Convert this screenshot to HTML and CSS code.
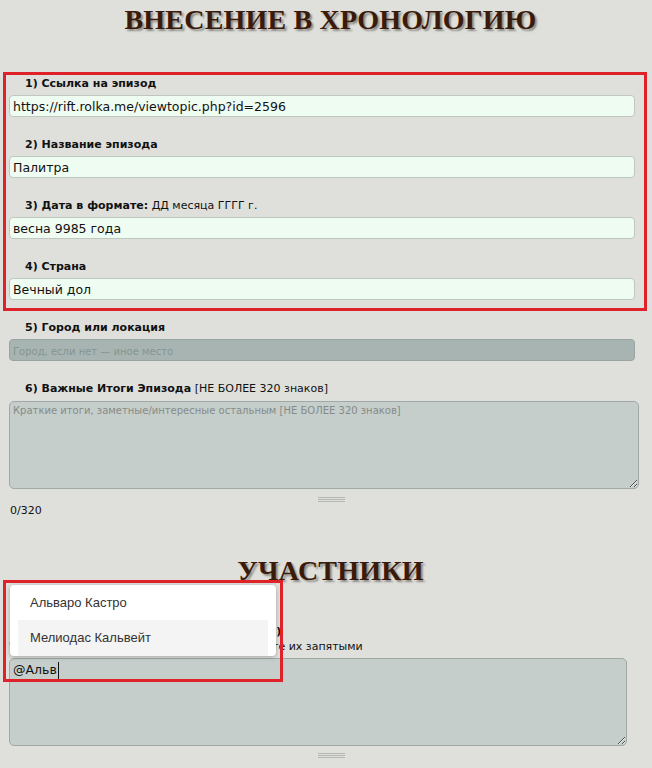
FILE: index.html
```html
<!DOCTYPE html>
<html lang="ru">
<head>
<meta charset="utf-8">
<title>Внесение в хронологию</title>
<link rel="stylesheet" href="styles.css">
</head>
<body>
<div class="page">
  <h1 class="title">ВНЕСЕНИЕ В ХРОНОЛОГИЮ</h1>

  <div class="group">
    <div class="field">
      <div class="label"><b>1) Ссылка на эпизод</b></div>
      <input class="inp" type="text" value="https://rift.rolka.me/viewtopic.php?id=2596">
    </div>
    <div class="field">
      <div class="label"><b>2) Название эпизода</b></div>
      <input class="inp" type="text" value="Палитра">
    </div>
    <div class="field">
      <div class="label"><b>3) Дата в формате:</b> ДД месяца ГГГГ г.</div>
      <input class="inp" type="text" value="весна 9985 года">
    </div>
    <div class="field">
      <div class="label"><b>4) Страна</b></div>
      <input class="inp" type="text" value="Вечный дол">
    </div>
  </div>

  <div class="field">
    <div class="label"><b>5) Город или локация</b></div>
    <input class="inp inp-dark" type="text" placeholder="Город, если нет — иное место">
  </div>
  <div class="field field-6">
    <div class="label"><b>6) Важные Итоги Эпизода</b> [НЕ БОЛЕЕ 320 знаков]</div>
    <textarea class="area area-6" placeholder="Краткие итоги, заметные/интересные остальным [НЕ БОЛЕЕ 320 знаков]"></textarea>
  </div>
  <div class="grip"></div>
  <div class="counter">0/320</div>

  <h1 class="title title-2">УЧАСТНИКИ</h1>

  <div class="field field-7">
    <div class="label label-7"><b>7) Участники эпизода (ники персонажей)</b></div>
    <div class="hint">Через @ укажите всех участников, разделяйте их запятыми</div>
    <div class="area-wrap">
      <textarea class="area area-7">@Альв</textarea>
      <span class="caret"></span>
      <div class="dropdown">
        <div class="opt">Альваро Кастро</div>
        <div class="opt opt-active">Мелиодас Кальвейт</div>
      </div>
      <div class="mark"></div>
    </div>
  </div>
  <div class="grip grip-2"></div>
</div>
</body>
</html>
```

FILE: styles.css
```css
html, body {
  margin: 0;
  padding: 0;
  background: #dfe0dc;
}
body {
  font-family: "DejaVu Sans", Verdana, sans-serif;
  color: #111;
  height: 768px;
  overflow: hidden;
}
.page {
  padding-left: 9px;
  width: 643px;
}
.title {
  margin: 0 0 32px;
  padding-top: 2px;
  height: 38px;
  line-height: 36px;
  text-align: center;
  font-family: "Liberation Serif", "Times New Roman", serif;
  font-weight: bold;
  font-size: 28px;
  color: #3a1a0a;
  text-shadow: 2px 2px 2px #8b8a84;
  letter-spacing: 0.2px;
}
.group {
  margin-left: -6px;
  width: 632px;
  border: 3px solid #df2129;
  padding: 0 3px;
  margin-bottom: 8px;
}
.field {
  padding: 2px 0 8px;
}
.field + .field {
  margin-top: 11px;
}
.label {
  font-size: 11px;
  line-height: 14px;
  height: 14px;
  padding-left: 16px;
  margin-bottom: 4px;
  white-space: nowrap;
}
.label b {
  font-weight: bold;
}
.label-7 {
  letter-spacing: -0.25px;
}
.inp {
  display: block;
  box-sizing: border-box;
  width: 626px;
  height: 22px;
  margin: 0;
  padding: 0 3px;
  border: 1px solid #bec8bf;
  border-radius: 4px;
  background: #effcf2;
  font-family: "DejaVu Sans", Verdana, sans-serif;
  font-size: 12.5px;
  color: #111;
  outline: none;
}
.inp-dark {
  background: #a7b4b1;
  border-color: #98a4a1;
}
.inp-dark::placeholder {
  color: #849491;
  font-size: 10px;
}
.field-6 {
  padding-bottom: 0;
}
.field-6 .label {
  margin-bottom: 5px;
}
.area {
  display: block;
  box-sizing: border-box;
  margin: 0;
  padding: 3px 3px;
  border: 1px solid #a0a9a6;
  border-radius: 5px;
  background: #c5cecb;
  font-family: "DejaVu Sans", Verdana, sans-serif;
  color: #111;
  outline: none;
}
.area-6 {
  width: 630px;
  height: 88px;
  font-size: 10px;
}
.area-6::placeholder {
  color: #858b89;
}
.grip {
  width: 27px;
  height: 5px;
  margin: 8px 0 0 309px;
  border-top: 1px solid #b3b7b4;
  border-bottom: 1px solid #b3b7b4;
  background: linear-gradient(#b3b7b4, #b3b7b4) center / 100% 1px no-repeat;
  box-sizing: border-box;
}
.counter {
  font-size: 11px;
  line-height: 14px;
  margin-top: 2px;
  padding-left: 1px;
}
.title-2 {
  margin: 33px 0 0;
}
.field-7 {
  padding: 34px 0 0;
}
.field-7 .label {
  margin-bottom: 1px;
}
.hint {
  font-size: 11px;
  line-height: 14px;
  height: 14px;
  padding-left: 0;
  margin-bottom: 4px;
  white-space: nowrap;
}
.area-wrap {
  position: relative;
  width: 618px;
}
.area-7 {
  width: 618px;
  height: 88px;
  font-size: 12.5px;
  padding: 3px 3px;
  resize: vertical;
}
.caret {
  position: absolute;
  left: 49px;
  top: 4px;
  width: 1px;
  height: 17px;
  background: #111;
}
.dropdown {
  position: absolute;
  left: 1px;
  top: -73px;
  width: 266px;
  box-sizing: border-box;
  padding: 0 8px;
  background: #fff;
  border-radius: 4px;
  box-shadow: 0 1px 4px rgba(0, 0, 0, 0.28);
  font-family: "Liberation Sans", Arial, sans-serif;
  font-size: 13px;
  color: #333;
}
.opt {
  height: 35px;
  line-height: 35px;
  padding-left: 12px;
}
.opt-active {
  background: #f4f4f4;
  height: 36px;
  line-height: 36px;
}
.mark {
  position: absolute;
  left: -6px;
  top: -78px;
  width: 274px;
  height: 96px;
  border: 3px solid #df2129;
}
.grip-2 {
  margin-top: 7px;
}
```
